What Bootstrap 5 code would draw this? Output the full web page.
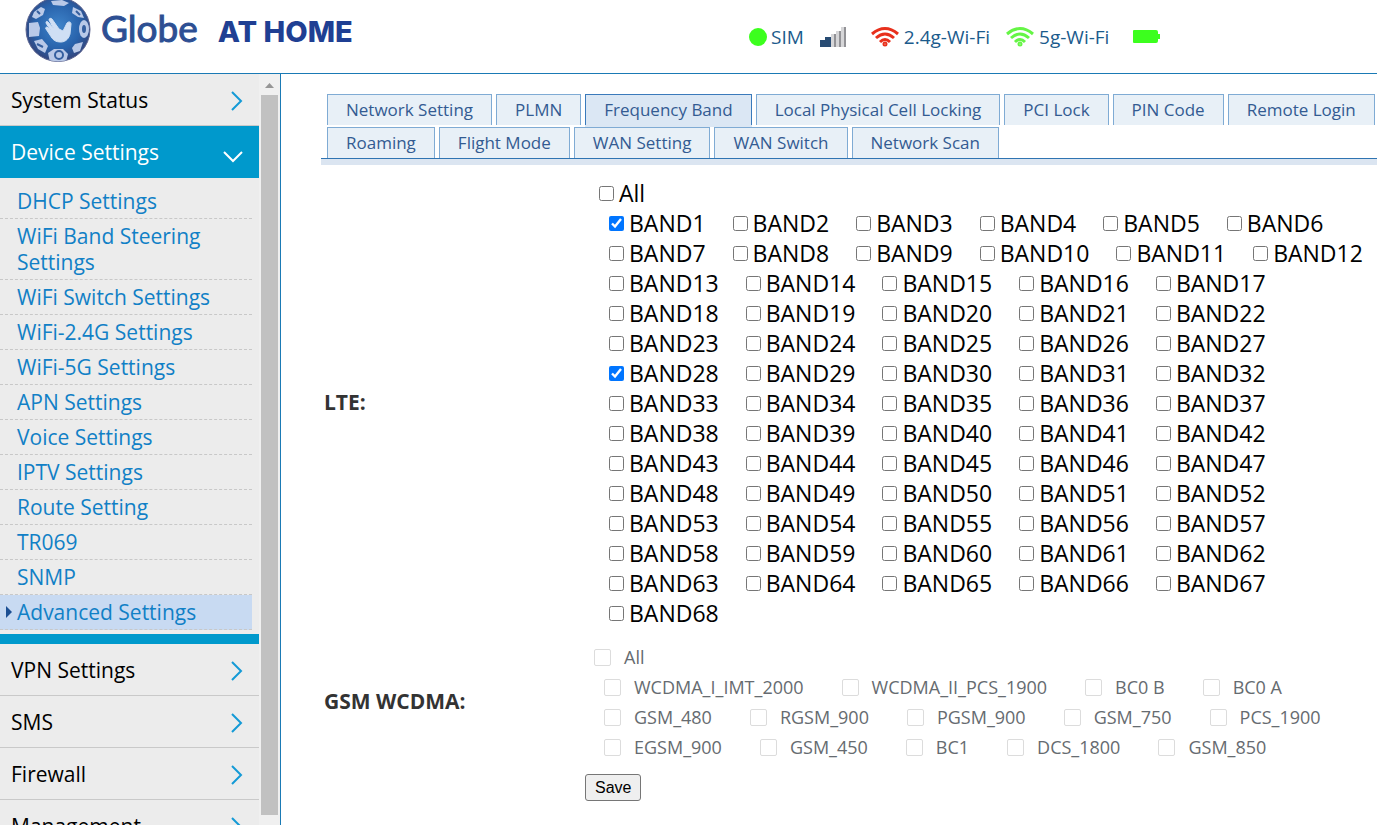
<!DOCTYPE html>
<html lang="en">
<head>
<meta charset="utf-8">
<meta name="viewport" content="width=device-width, initial-scale=1">
<title>Globe AT HOME</title>
<link href="https://cdn.jsdelivr.net/npm/bootstrap@5.3.0/dist/css/bootstrap.min.css" rel="stylesheet">
<style>
html, body { height: 100%; }
body { font-family: "Open Sans", "Noto Sans", sans-serif; color: #000; overflow: hidden; }
a { text-decoration: none; }
.topbar { height: 74px; border-bottom: 1px solid #1a7ab5; padding-left: 24px; }
.logo-name { font: 400 37px/40px Lato, sans-serif; color: #2d4f93; -webkit-text-stroke: 1px #2d4f93; margin-left: 9px; }
.logo-tag { font: 800 29px/40px Inter, sans-serif; color: #1f3f93; margin-left: 20px; }
.status { color: #1b5b8c; font-size: 19px; line-height: 26px; width: 628px; }
.dot { width: 18px; height: 18px; background: #3cff1e; }
.side { width: 281px; border-right: 1px solid #1a7ab5; background: #ececec; }
.menu { width: 259px; overflow: hidden; }
.menu-head { height: 52px; padding: 2px 16px 0 11px; font-size: 21px; color: #000; border-bottom: 1px solid #c9c9c9; }
.menu-head.open { background: #09c; color: #fff; border-color: #09c; }
.menu-head svg { fill: none; stroke: #149ad6; stroke-width: 2; }
.menu-head.open svg { stroke: #fff; margin-top: 8px; }
.submenu { padding: 6px 7px 4px 0; border-bottom: 10px solid #09c; }
.submenu a { display: block; position: relative; font-size: 21px; line-height: 26px; padding: 4px 17px; color: #1180c6; border-bottom: 1px dashed #c8c8c8; }
.submenu a.current { background: #c8daf2; }
.submenu a.current::before { content: ""; position: absolute; left: 6px; top: 11px; border: 6px solid transparent; border-left-color: #1c4f93; border-right: 0; }
.track { background: #f0f0f0; width: 21px; padding: 0 2px 10px; }
.track svg { height: 21px; flex: none; }
.thumb { background: #c1c1c1; }
.main { padding: 20px 0 0 40px; min-width: 0; }
.tabs { gap: 2px 4px; padding-left: 6px; border-bottom: 1px solid #2f74b2; box-shadow: 0 6px #dbe5f1; margin-bottom: 19px; }
.tabs .nav-link { border: 1px solid #7fabd4; border-bottom: 0; border-radius: 0; margin: 0; background: #e8f0f7; color: #335b92; font-size: 17px; line-height: 30px; padding: 0 18px; }
.tabs .nav-link.active { background: #dbe7f4; color: #335b92; border: 1px solid #3a7abb; border-bottom: 0; box-shadow: 0 2px #dbe7f4; }
.group-name { font-size: 21px; font-weight: 700; color: #333; padding-left: 3px; }
.opts { line-height: 30px; }
.opts label { display: flex; align-items: center; white-space: nowrap; }
.lte { font-size: 23px; padding-left: 14px; }
.lte label { gap: 5px; }
.lte .list { padding-left: 10px; column-gap: 27px; }
.lte input { width: 15px; height: 15px; margin: 0; }
.gsm-row { margin-top: 14px; }
.gsm { font-size: 18px; padding-left: 9px; color: #666b70; }
.gsm label { gap: 13px; }
.gsm .list { padding-left: 10px; column-gap: 38px; }
.gsm input { appearance: none; width: 17px; height: 17px; margin: 0; border: 1px solid #dcdcdc; border-radius: 2px; background: #fff; }
.save { font: 16px/19px "Liberation Sans", sans-serif; color: #000; background: #efefef; border: 1px solid #767676; border-radius: 3px; padding: 3px 9px; }
</style>
</head>
<body class="d-flex flex-column">
<header class="topbar d-flex flex-shrink-0">
  <svg width="68" height="64" viewBox="24 0 68 64" aria-hidden="true">
    <defs>
      <radialGradient id="ball" cx=".5" cy=".45" r=".55"><stop offset="0" stop-color="#3f85cb"/><stop offset=".65" stop-color="#2862ab"/><stop offset="1" stop-color="#33457c"/></radialGradient>
      <clipPath id="rim"><circle cx="58" cy="29.500" r="32"/></clipPath>
    </defs>
    <circle cx="58" cy="29.500" r="32" fill="url(#ball)" stroke="#5c6490"/>
    <g clip-path="url(#rim)" fill="#b9c9e8">
      <path d="M29 23l9-1 2 6-1 8-10 1z"/>
      <path d="M34 12l7-5 4 2-2 6-7 4-4-2z"/>
      <path d="M51 1l11-1 7 3-5 3-11-1z"/>
      <path d="M73 7l8 4 3 7-6-1-6-4z"/>
      <ellipse cx="84" cy="29" rx="5" ry="9"/>
      <path d="M75 44l8-2-3 9-6 2-2-5z"/>
      <path d="M34 41l8-2 6 7-3 7-7-4z"/>
      <path d="M48 53l6-4h9l5 5-2 8H50z"/>
    </g>
    <g fill="none" stroke="#355f9f" stroke-width="2"><ellipse cx="84" cy="29" rx="1" ry="3"/><circle cx="59" cy="55" r="4"/><path d="M37 11l3 3M76 11l4 4M37 44l6 3"/></g>
    <path d="M50 35l-4-6c-1-1 0-2 1-2l4 4-5-8c0-2 1-2 2-1l6 7-5-9c0-2 2-2 3-1l7 10 4 2 4-8c2-2 4-1 4 1l-1 10c-1 4-4 8-9 8-6 0-8-2-11-7z" fill="#cfdff4" stroke="#cfdff4"/>
  </svg>
  <div class="logo-name mt-2 pt-0">Globe</div>
  <div class="logo-tag mt-2 pt-1">AT HOME</div>
  <div class="status d-flex align-items-center ms-auto">
    <span class="dot rounded-circle me-1"></span><span>SIM</span>
    <svg class="ms-3" width="27" height="22" viewBox="0 0 27 22" aria-hidden="true"><path d="M0 14h5v7H0zM5 11h6v10H5z" fill="#284b73"/><path d="M11 8h5v13h-5zM16 5h5v16h-5zM21 1h5v20h-5z" fill="#d6d6d8"/><path d="M15 8v13M20 5v16M25 1v20" stroke="#929296" stroke-width="2"/></svg>
    <svg class="ms-4 me-1" width="29" height="21" viewBox="0 0 29 21" fill="none" stroke="#e8301c" stroke-width="3" aria-hidden="true"><path d="M1 8Q14 -3 27 8M5 12Q14 4 23 12M9 16Q14 11 19 16"/><circle cx="14" cy="18" r="1"/></svg>
    <span>2.4g-Wi-Fi</span>
    <svg class="ms-3 me-1" width="29" height="21" viewBox="0 0 29 21" fill="none" stroke="#65f545" stroke-width="3" aria-hidden="true"><path d="M1 8Q14 -3 27 8M5 12Q14 4 23 12M9 16Q14 11 19 16"/><circle cx="14" cy="18" r="1"/></svg>
    <span>5g-Wi-Fi</span>
    <svg class="ms-4" width="28" height="14" viewBox="0 0 28 14" aria-hidden="true"><path d="M1 0h22q2 0 2 2v2h2v5h-2v2q0 2-2 2H1q-1 0-1-1V1q0-1 1-1z" fill="#3cff1e"/></svg>
  </div>
</header>
<div class="d-flex flex-grow-1 overflow-hidden">
  <aside class="side d-flex flex-shrink-0">
    <nav class="menu">
      <a href="#" class="menu-head d-flex align-items-center justify-content-between">System Status<svg width="12" height="20"><path d="M1 1l9 9-9 9"/></svg></a>
      <a href="#" class="menu-head open d-flex align-items-center justify-content-between">Device Settings<svg width="20" height="12"><path d="M1 1l9 9 9-9"/></svg></a>
      <div class="submenu">
        <a href="#">DHCP Settings</a>
        <a href="#">WiFi Band Steering Settings</a>
        <a href="#">WiFi Switch Settings</a>
        <a href="#">WiFi-2.4G Settings</a>
        <a href="#">WiFi-5G Settings</a>
        <a href="#">APN Settings</a>
        <a href="#">Voice Settings</a>
        <a href="#">IPTV Settings</a>
        <a href="#">Route Setting</a>
        <a href="#">TR069</a>
        <a href="#">SNMP</a>
        <a href="#" class="current">Advanced Settings</a>
      </div>
      <a href="#" class="menu-head d-flex align-items-center justify-content-between">VPN Settings<svg width="12" height="20"><path d="M1 1l9 9-9 9"/></svg></a>
      <a href="#" class="menu-head d-flex align-items-center justify-content-between">SMS<svg width="12" height="20"><path d="M1 1l9 9-9 9"/></svg></a>
      <a href="#" class="menu-head d-flex align-items-center justify-content-between">Firewall<svg width="12" height="20"><path d="M1 1l9 9-9 9"/></svg></a>
      <a href="#" class="menu-head d-flex align-items-center justify-content-between">Management<svg width="12" height="20"><path d="M1 1l9 9-9 9"/></svg></a>
    </nav>
    <div class="track d-flex flex-column">
      <svg viewBox="0 0 17 21" aria-hidden="true"><path d="M4 14l4.500-5 4.500 5z" fill="#969696"/></svg>
      <div class="thumb flex-grow-1"></div>
    </div>
  </aside>
  <main class="main flex-grow-1">
    <nav class="tabs nav nav-tabs">
      <a class="nav-link" href="#">Network Setting</a>
      <a class="nav-link" href="#">PLMN</a>
      <a class="nav-link active" aria-current="page" href="#">Frequency Band</a>
      <a class="nav-link" href="#">Local Physical Cell Locking</a>
      <a class="nav-link" href="#">PCI Lock</a>
      <a class="nav-link" href="#">PIN Code</a>
      <a class="nav-link" href="#">Remote Login</a>
      <a class="nav-link" href="#">Roaming</a>
      <a class="nav-link" href="#">Flight Mode</a>
      <a class="nav-link" href="#">WAN Setting</a>
      <a class="nav-link" href="#">WAN Switch</a>
      <a class="nav-link" href="#">Network Scan</a>
    </nav>
    <form>
      <div class="row g-0 align-items-center">
        <div class="col-3 group-name">LTE:</div>
        <div class="col-9 opts lte">
          <label><input type="checkbox">All</label>
          <div class="list d-flex flex-wrap" id="lte"></div>
        </div>
      </div>
      <div class="row g-0 align-items-center gsm-row">
        <div class="col-3 group-name">GSM WCDMA:</div>
        <div class="col-9 opts gsm">
          <label><input type="checkbox" disabled>All</label>
          <div class="list d-flex flex-wrap" id="gsm"></div>
        </div>
      </div>
      <div class="row g-0 mt-2 pt-1"><div class="col-9 offset-3"><button type="button" class="save">Save</button></div></div>
    </form>
  </main>
</div>
<script src="https://cdn.jsdelivr.net/npm/bootstrap@5.3.0/dist/js/bootstrap.bundle.min.js"></script>
<script>
const enabledBands = [1, 28];
function addOption(list, name, checked, disabled) {
  const label = document.createElement('label');
  const box = document.createElement('input');
  box.type = 'checkbox';
  box.checked = checked;
  box.disabled = disabled;
  label.append(box, name);
  list.append(label);
}
const lte = document.getElementById('lte');
for (let n = 1; n <= 68; n++) addOption(lte, 'BAND' + n, enabledBands.includes(n), false);
const gsm = document.getElementById('gsm');
['WCDMA_I_IMT_2000', 'WCDMA_II_PCS_1900', 'BC0 B', 'BC0 A', 'GSM_480', 'RGSM_900', 'PGSM_900', 'GSM_750',
 'PCS_1900', 'EGSM_900', 'GSM_450', 'BC1', 'DCS_1800', 'GSM_850'].forEach(name => addOption(gsm, name, false, true));
</script>
</body>
</html>
